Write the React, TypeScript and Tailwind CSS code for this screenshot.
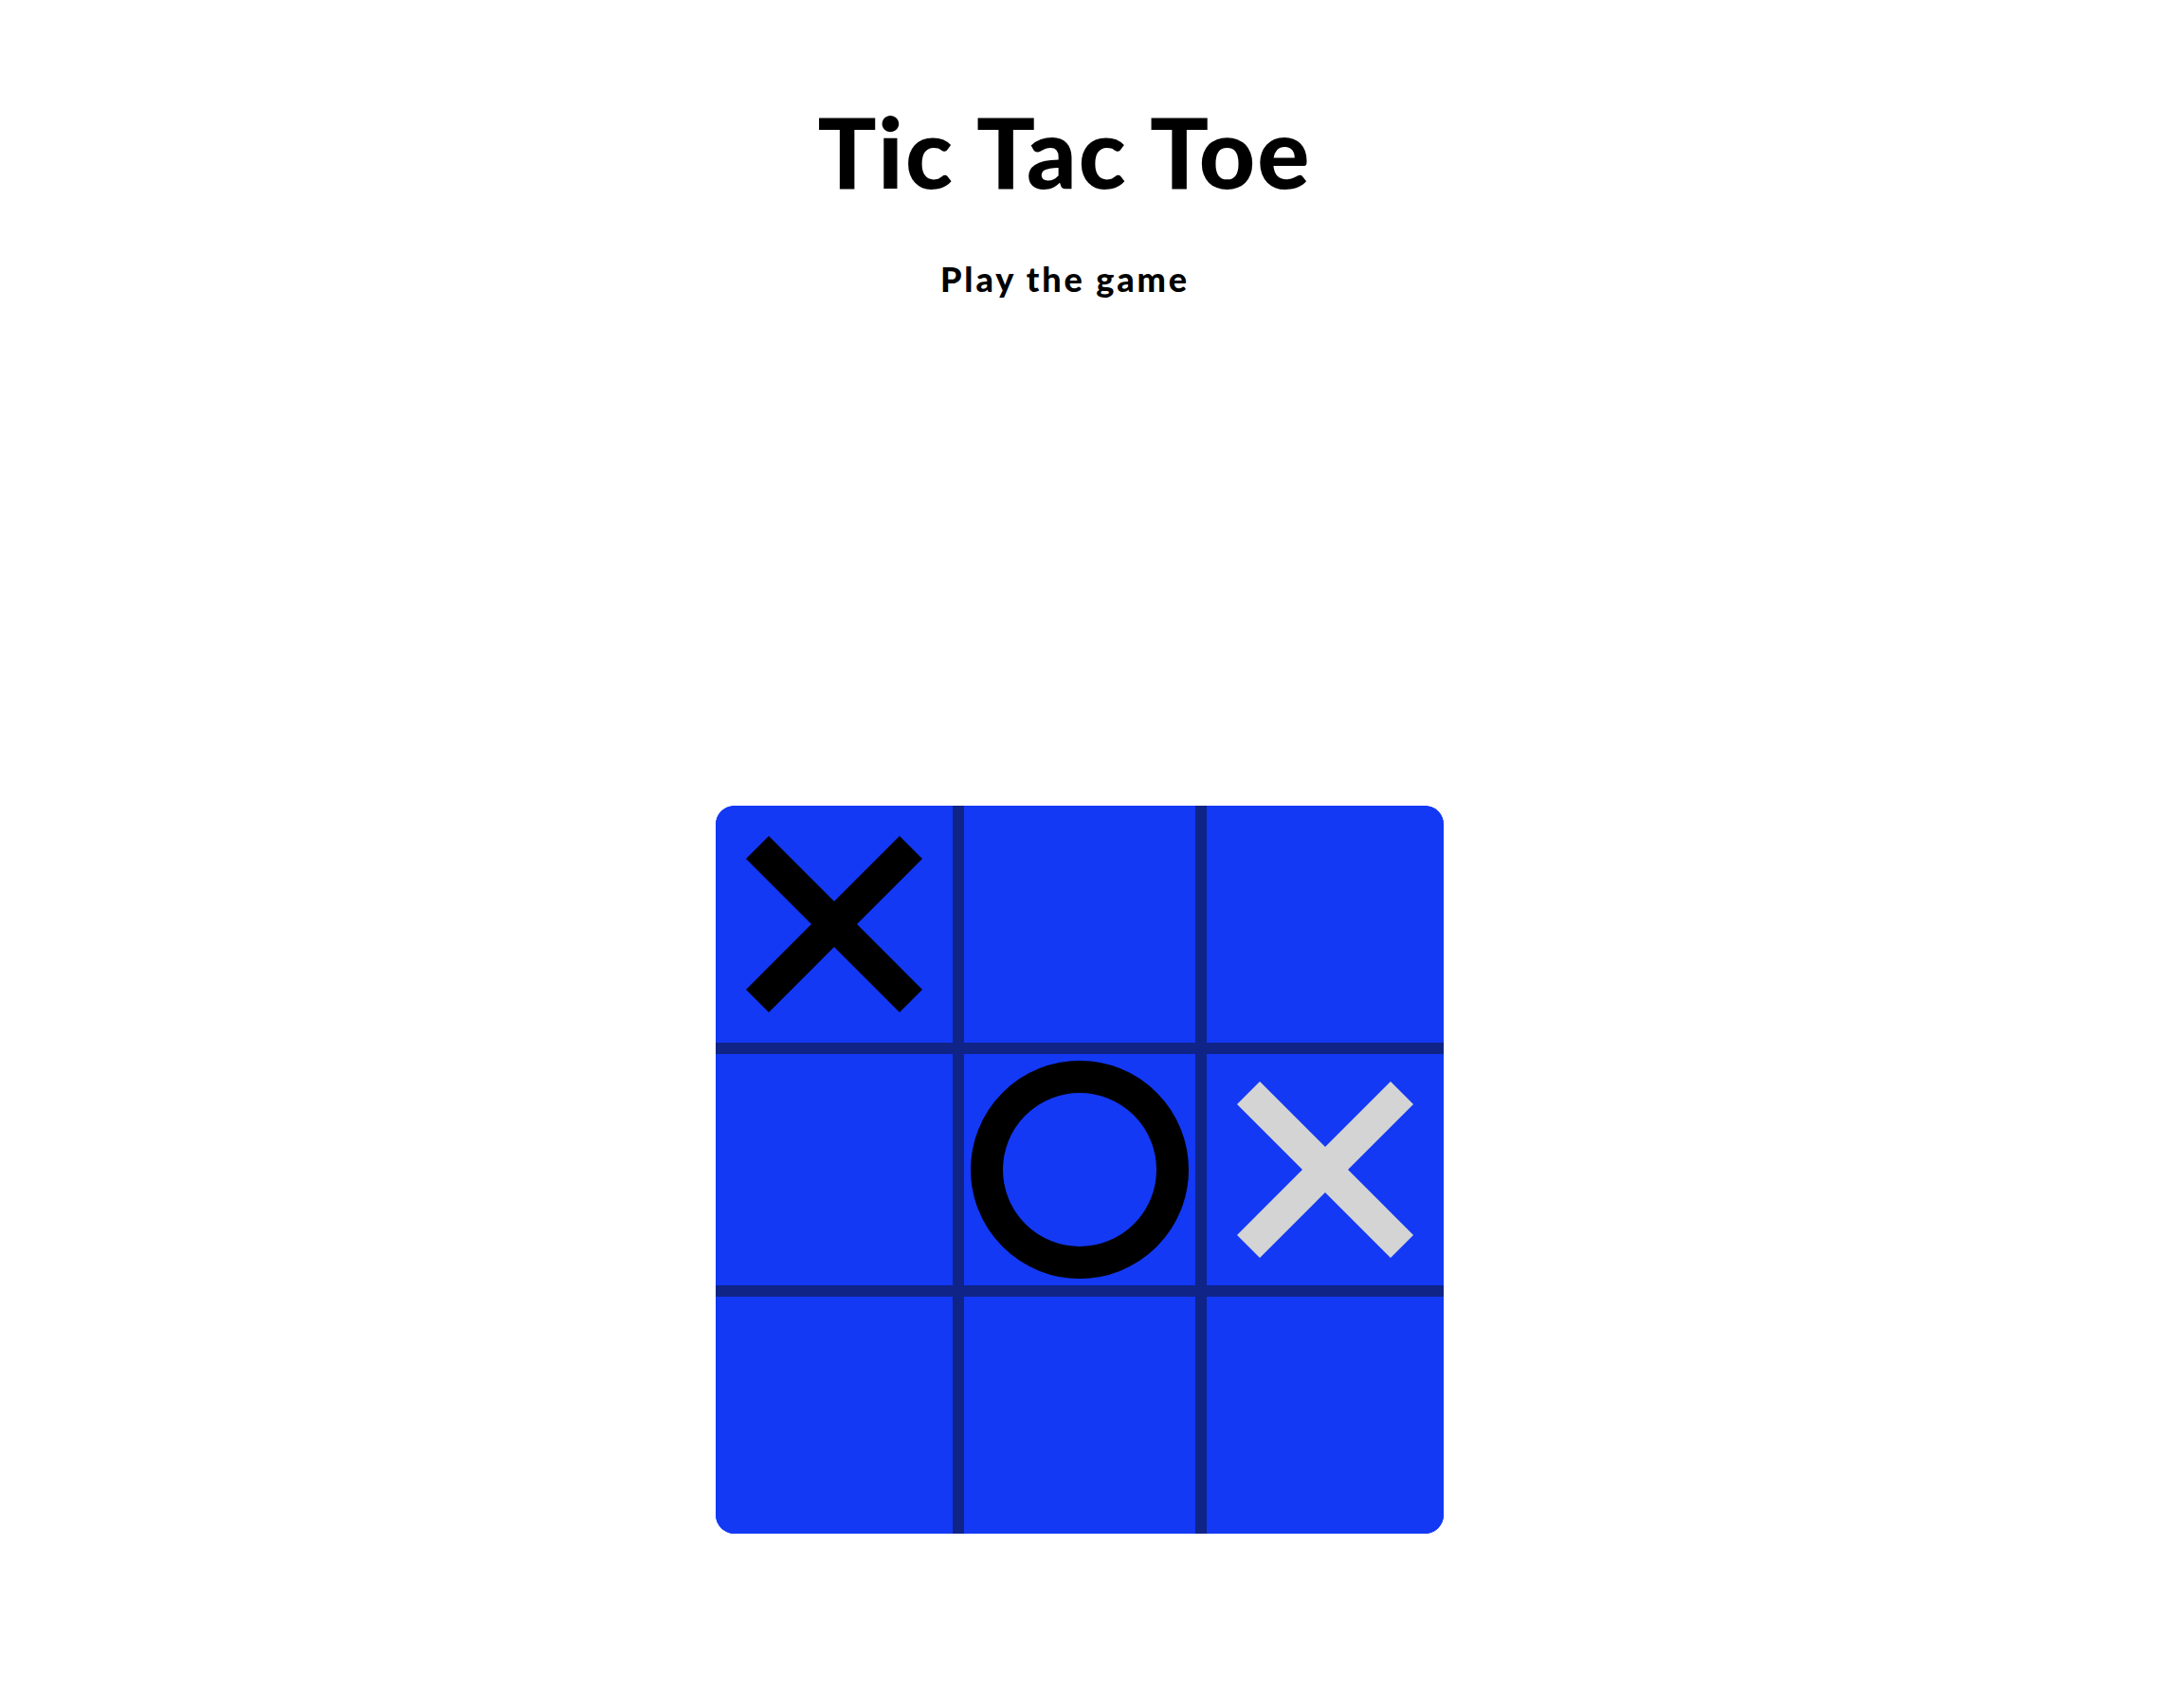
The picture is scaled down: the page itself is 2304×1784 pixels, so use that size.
import React from "react";

type Mark = "X" | "O" | "x" | null;

const board: Mark[] = ["X", null, null, null, "O", "x", null, null, null];

function XMark({ color }: { color: string }) {
  return (
    <svg width="186" height="186" viewBox="0 0 186 186">
      <line x1="12" y1="12" x2="174" y2="174" stroke={color} strokeWidth="34" />
      <line x1="174" y1="12" x2="12" y2="174" stroke={color} strokeWidth="34" />
    </svg>
  );
}

function OMark() {
  return (
    <svg width="230" height="230" viewBox="0 0 230 230">
      <circle cx="115" cy="115" r="98" fill="none" stroke="#000" strokeWidth="34" />
    </svg>
  );
}

const cellBorders = [
  "border-r-[6px] border-b-[6px]",
  "border-l-[6px] border-r-[6px] border-b-[6px]",
  "border-l-[6px] border-b-[6px]",
  "border-r-[6px] border-t-[6px] border-b-[6px]",
  "border-[6px]",
  "border-l-[6px] border-t-[6px] border-b-[6px]",
  "border-r-[6px] border-t-[6px]",
  "border-l-[6px] border-r-[6px] border-t-[6px]",
  "border-l-[6px] border-t-[6px]",
];

export default function App() {
  return (
    <div className="min-h-screen bg-white flex flex-col items-center pt-[108px] font-['Lato',sans-serif] text-black">
      <div className="flex flex-col items-center pr-[60px]">
        <h1 className="text-[103px] leading-none font-black tracking-[2px] pl-[2px]">Tic Tac Toe</h1>
        <p className="mt-[62px] text-[36px] leading-[42px] font-black tracking-[2.9px] pl-[3px]">Play the game</p>
      </div>
      <div className="mt-[535px] pr-[26px]">
        <div className="grid grid-cols-[256px_256px_256px] grid-rows-[256px_256px_256px] w-[768px] h-[768px] rounded-[20px] overflow-hidden bg-[#1339f4]">
          {board.map((m, i) => (
            <div
              key={i}
              className={`flex items-center justify-center border-[#0f2486] bg-[#1339f4] ${cellBorders[i]}`}
            >
              {m === "X" && <XMark color="#000" />}
              {m === "x" && <XMark color="#d4d4d4" />}
              {m === "O" && <OMark />}
            </div>
          ))}
        </div>
      </div>
    </div>
  );
}
